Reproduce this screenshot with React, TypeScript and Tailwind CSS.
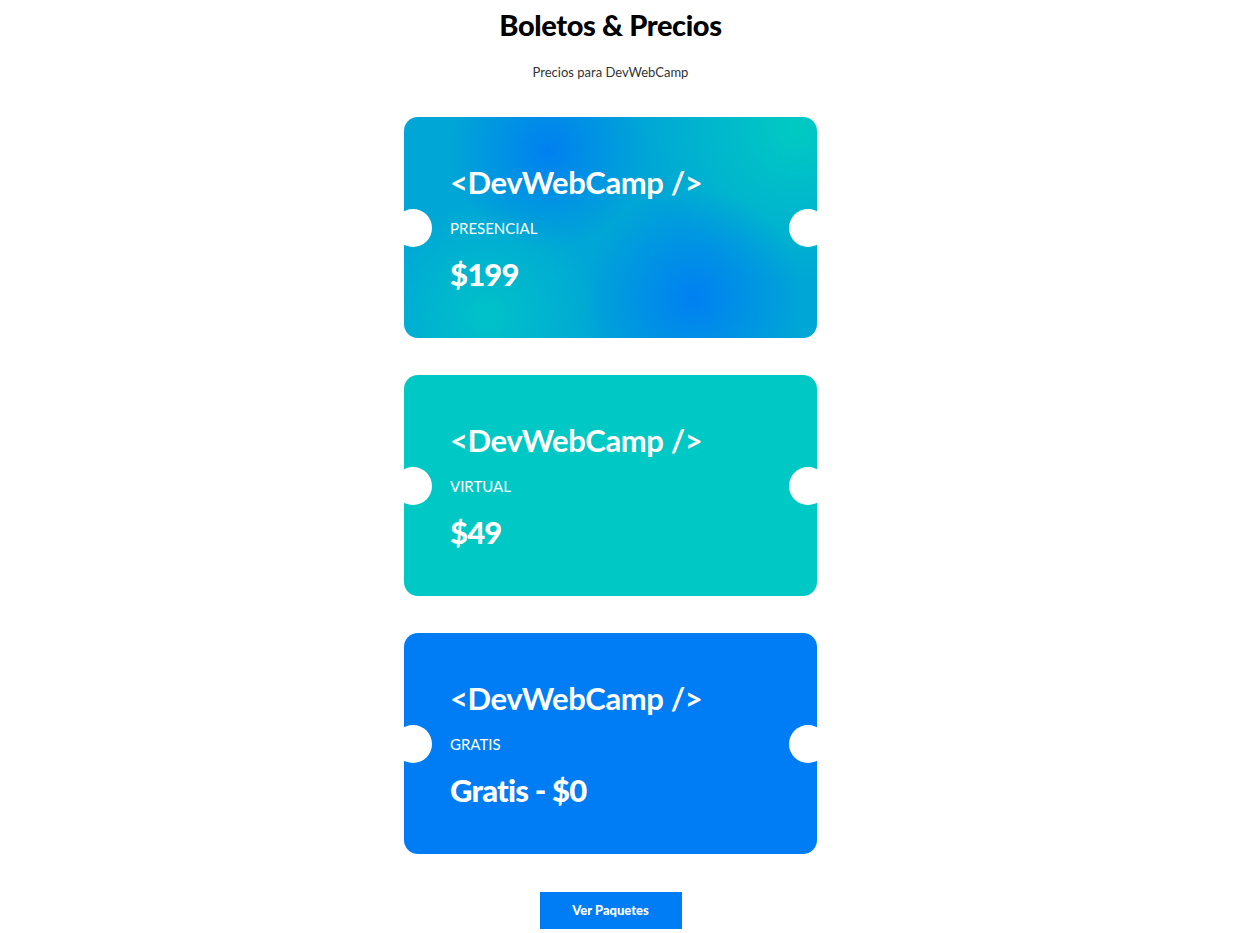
import React from "react";

const tickets = [
  { label: "PRESENCIAL", price: "$199", bg: "bg-[radial-gradient(circle_at_35%_15%,#0080f0_0%,transparent_30%),radial-gradient(circle_at_70%_82%,#0080f2_0%,transparent_32%),radial-gradient(circle_at_95%_5%,#00cac2_0%,transparent_35%),radial-gradient(circle_at_20%_90%,#00c2c8_0%,transparent_30%),linear-gradient(#00a6d6,#00a6d6)]" },
  { label: "VIRTUAL", price: "$49", bg: "bg-[#00c9c5]" },
  { label: "GRATIS", price: "Gratis - $0", bg: "bg-[#007df4]" },
];

export default function App() {
  return (
    <div className="w-[1221px] min-h-[933px] bg-white flex flex-col items-center font-['Lato',sans-serif]">
      <h2 className="mt-[7px] text-[29px] leading-[36px] font-black text-black tracking-[-0.4px]">Boletos &amp; Precios</h2>
      <p className="mt-[21px] text-[13px] leading-[16px] text-[#333]">Precios para DevWebCamp</p>
      <div className="mt-[37px] flex flex-col gap-[37px]">
        {tickets.map((t) => (
          <div key={t.label} className={`relative w-[413px] h-[221px] rounded-[14px] overflow-hidden ${t.bg} text-white pl-[46px] pt-[45px]`}>
            <p className="text-[31px] leading-[40px] font-bold tracking-[-0.4px]">&lt;DevWebCamp /&gt;</p>
            <p className="mt-[17px] text-[15px] leading-[18px] font-normal">{t.label}</p>
            <p className="mt-[17px] text-[31px] leading-[40px] font-black tracking-[-0.8px]">{t.price}</p>
            <span className="absolute left-[-10px] top-1/2 -translate-y-1/2 w-[38px] h-[38px] rounded-full bg-white" />
            <span className="absolute right-[-10px] top-1/2 -translate-y-1/2 w-[38px] h-[38px] rounded-full bg-white" />
          </div>
        ))}
      </div>
      <button className="mt-[38px] w-[142px] h-[37px] bg-[#007df4] text-white text-[13px] font-black">Ver Paquetes</button>
    </div>
  );
}
